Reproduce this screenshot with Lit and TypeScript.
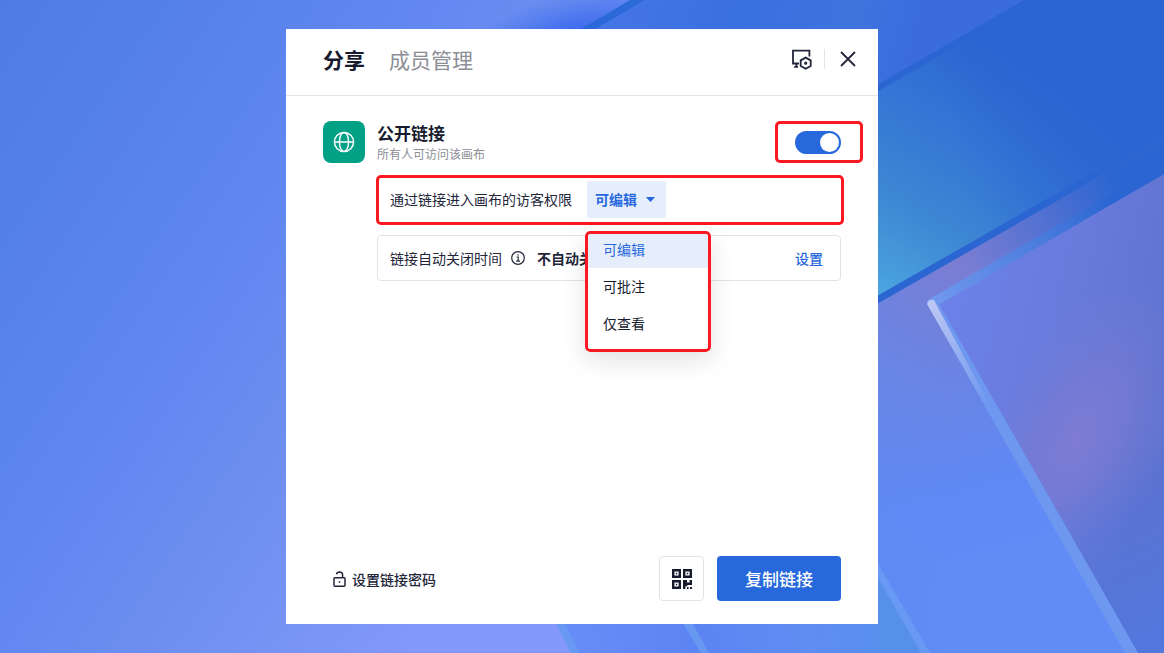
import { LitElement, html, css, svg } from "lit";
import { customElement, state } from "lit/decorators.js";

@customElement("app-backdrop")
class AppBackdrop extends LitElement {
  static styles = css`
    :host { display: block; overflow: hidden; }
    .art { display: block; width: 100%; height: 100%; }
  `;

  render() {
    return html`
      <svg class="art" viewBox="0 0 1164 653" preserveAspectRatio="xMidYMid slice" aria-hidden="true">
        <defs>
          <linearGradient id="base" gradientUnits="userSpaceOnUse" x1="0" y1="0" x2="581" y2="392">
            <stop offset="0" stop-color="#4d7de4" />
            <stop offset="0.25" stop-color="#5681eb" />
            <stop offset="0.5" stop-color="#6287f2" />
            <stop offset="0.65" stop-color="#6a8def" />
            <stop offset="1" stop-color="#8299f9" />
          </linearGradient>
          <radialGradient id="topGlow" gradientUnits="userSpaceOnUse" cx="0" cy="0" r="1" gradientTransform="translate(575 38) rotate(-14) scale(120 46)">
            <stop offset="0" stop-color="#3063ee" />
            <stop offset="1" stop-color="#3b69ee" stop-opacity="0" />
          </radialGradient>
          <linearGradient id="upper" gradientUnits="userSpaceOnUse" x1="620" y1="0" x2="900" y2="80">
            <stop offset="0" stop-color="#4475e4" />
            <stop offset="0.4" stop-color="#3a6fe0" />
            <stop offset="0.8" stop-color="#3f73dd" />
            <stop offset="1" stop-color="#3a6cde" />
          </linearGradient>
          <linearGradient id="teal" gradientUnits="userSpaceOnUse" x1="870" y1="290" x2="1010" y2="60">
            <stop offset="0" stop-color="#4ba5df" />
            <stop offset="0.35" stop-color="#3d86d3" />
            <stop offset="0.7" stop-color="#3374d5" />
            <stop offset="1" stop-color="#2a65d1" />
          </linearGradient>
          <linearGradient id="tealFade" gradientUnits="userSpaceOnUse" x1="960" y1="160" x2="1135" y2="110">
            <stop offset="0" stop-color="#2a65d1" stop-opacity="0" />
            <stop offset="1" stop-color="#2a65d1" />
          </linearGradient>
          <linearGradient id="violet" gradientUnits="userSpaceOnUse" x1="920" y1="270" x2="1000" y2="560">
            <stop offset="0" stop-color="#7a7dd2" />
            <stop offset="0.3" stop-color="#6d83e0" />
            <stop offset="0.75" stop-color="#5f89f5" />
            <stop offset="1" stop-color="#618bf5" />
          </linearGradient>
          <linearGradient id="violetLeft" gradientUnits="userSpaceOnUse" x1="870" y1="0" x2="950" y2="0">
            <stop offset="0" stop-color="#5f8af0" stop-opacity="0.4" />
            <stop offset="1" stop-color="#5f8af0" stop-opacity="0" />
          </linearGradient>
          <linearGradient id="stripFade" gradientUnits="userSpaceOnUse" x1="970" y1="270" x2="1125" y2="190">
            <stop offset="0" stop-color="#2a65d1" stop-opacity="0" />
            <stop offset="1" stop-color="#2a65d1" />
          </linearGradient>
          <linearGradient id="pane" gradientUnits="userSpaceOnUse" x1="940" y1="310" x2="1164" y2="360">
            <stop offset="0" stop-color="#6c82ea" />
            <stop offset="0.6" stop-color="#687ad9" />
            <stop offset="1" stop-color="#5d72cf" />
          </linearGradient>
          <radialGradient id="paneGlow" gradientUnits="userSpaceOnUse" cx="0" cy="0" r="1" gradientTransform="translate(1078 440) rotate(-62) scale(180 90)">
            <stop offset="0" stop-color="#7f7bd2" />
            <stop offset="0.4" stop-color="#797bd4" stop-opacity="0.7" />
            <stop offset="1" stop-color="#727bd8" stop-opacity="0" />
          </radialGradient>
          <linearGradient id="paneLow" gradientUnits="userSpaceOnUse" x1="1090" y1="480" x2="1160" y2="640">
            <stop offset="0" stop-color="#5277dd" stop-opacity="0" />
            <stop offset="1" stop-color="#5277dd" />
          </linearGradient>
          <linearGradient id="edgeTop" gradientUnits="userSpaceOnUse" x1="930" y1="300" x2="1110" y2="195">
            <stop offset="0" stop-color="#7199ee" />
            <stop offset="0.6" stop-color="#4b7cdd" />
            <stop offset="1" stop-color="#2a65d1" />
          </linearGradient>
          <linearGradient id="edgeShine" gradientUnits="userSpaceOnUse" x1="928" y1="308" x2="990" y2="402">
            <stop offset="0" stop-color="#bcc6f3" />
            <stop offset="1" stop-color="#bcc6f3" stop-opacity="0" />
          </linearGradient>
          <linearGradient id="lower" gradientUnits="userSpaceOnUse" x1="560" y1="653" x2="900" y2="590">
            <stop offset="0" stop-color="#688ef8" />
            <stop offset="0.4" stop-color="#5c84f2" />
            <stop offset="0.7" stop-color="#608df2" />
            <stop offset="1" stop-color="#5590ec" />
          </linearGradient>
        </defs>
        <rect width="1164" height="653" fill="url(#base)" />
        <rect x="350" width="350" height="120" fill="url(#topGlow)" />
        <path d="M645 0H1030L877 92L595 60V29Z" fill="url(#upper)" />
        <path d="M630 0H645L580 38H566Z" fill="#2c69d8" />
        <path d="M877 85L1024 0H1164V180L877 310Z" fill="#2a65d1" />
        <path d="M877 92L1050 -8H1164V132L877 296Z" fill="url(#teal)" />
        <path d="M877 92L1050 -8H1164V132L877 296Z" fill="url(#tealFade)" />
        <path d="M877 304L1164 140V653H877Z" fill="url(#violet)" />
        <path d="M877 304L970 251V653H877Z" fill="url(#violetLeft)" />
        <path d="M927 275L1164 140V174L939 304Z" fill="url(#stripFade)" />
        <path d="M939 304L1164 174V653H1138Z" fill="url(#pane)" />
        <path d="M939 304L1164 174V653H1138Z" fill="url(#paneGlow)" />
        <path d="M939 304L1164 174V653H1138Z" fill="url(#paneLow)" />
        <path d="M927 303Q927 300 931 298L1164 164V174L938 305Z" fill="url(#edgeTop)" />
        <path d="M927 304Q929 299 935 300L939 304L1138 653H1125Z" fill="#6e98f0" />
        <path d="M927 304Q928 299 934 300L990 406V414Z" fill="url(#edgeShine)" />
        <path d="M560 615L877 562L930 653H575Z" fill="url(#lower)" />
        <path d="M877 570L925 653H877Z" fill="#5790ea" />
        <path d="M552 615H560L580 653H571Z" fill="#6799f3" />
        <path d="M678 615H688L709 653H701Z" fill="#6799f3" />
        <path d="M870 550L930 653H921L870 564Z" fill="#6799f5" />
      </svg>
    `;
  }
}

const icons = {
  device: svg`<path d="M8 15.5H2V2.6H18.4V8.4M5.4 15.5V19.2M3.2 18.8H7" /><path d="M14.7 9.6L19.7 12.4V18L14.7 20.8L9.7 18V12.4Z" /><circle cx="14.7" cy="15.2" r="0.7" />`,
  close: svg`<path d="M1 1L15 15M15 1L1 15" />`,
  globe: svg`<circle cx="11" cy="11" r="9.6" /><ellipse cx="11" cy="11" rx="4.6" ry="9.6" /><path d="M1.4 11H20.6" />`,
  info: svg`<circle cx="7" cy="7" r="6.3" /><path d="M5.6 6H7.2V10.2M5.2 10.2H9" /><path d="M7 3.2V4.6" />`,
  lock: svg`<path d="M1 7.6Q1 6.8 1.8 6.8H11.2Q12 6.8 12 7.6V14.2Q12 15.2 11 15.2H2Q1 15.2 1 14.2Z" /><path d="M9.6 6.8V4Q9.6 1 6.5 1Q4 1 3.4 3.2" /><path d="M6.5 10.2V11.8" />`,
};

@customElement("app-root")
class AppRoot extends LitElement {
  static styles = css`
    :host {
      display: block;
      position: relative;
      font-family: "Noto Sans CJK SC", "Noto Sans", sans-serif;
      font-size: 14px;
      line-height: 20px;
      color: #23263a;
    }
    * { box-sizing: border-box; }
    button, select { font: inherit; color: inherit; border: 0; background: none; padding: 0; margin: 0; cursor: pointer; }
    h2, p, ul { margin: 0; padding: 0; }
    .backdrop { position: absolute; inset: 0; }
    .stage {
      position: relative;
      display: flex;
      justify-content: center;
      min-height: 100vh;
      padding: 29px 16px;
    }
    .dialog { display: flex; flex-direction: column; width: 100%; max-width: 592px; background: #fff; }
    .icon { display: block; flex: none; fill: none; stroke: currentColor; stroke-width: 1.5; }
    .icon.bold { stroke-width: 1.8; }

    .header {
      display: flex;
      align-items: center;
      justify-content: space-between;
      padding: 15px 22px 21px 37px;
      border-bottom: 1px solid #e4e5e7;
      color: #23263a;
    }
    .tabs { display: flex; gap: 24px; }
    .tab { font-size: 21px; line-height: 30px; color: #8c8e96; }
    .tab.active { font-weight: 700; color: #181b2e; }
    .tools { display: flex; align-items: center; gap: 11px; }
    .divider { width: 1px; height: 20px; background: #e4e5e7; }
    .close { padding-left: 4px; }

    .content { flex: 1; padding: 25px 37px 24px; }
    .summary { display: flex; align-items: center; gap: 12px; margin-bottom: 12px; }
    .tile {
      display: grid;
      place-items: center;
      width: 42px;
      height: 42px;
      border-radius: 8px;
      background: #02a085;
      color: #fff;
    }
    .caption { flex: 1; }
    .title { font-size: 17px; line-height: 24px; font-weight: 700; color: #181b2e; }
    .hint { font-size: 12px; line-height: 18px; color: #8c8e96; }
    .marked { border: 3px solid #fd1821; border-radius: 5px; }
    .toggle { display: block; margin-right: -22px; padding: 7px 19px 6px 17px; }
    .switch {
      appearance: none;
      display: block;
      width: 46px;
      height: 23px;
      margin: 0;
      padding: 2px;
      border-radius: 12px;
      background: #b9bdc6;
      cursor: pointer;
    }
    .switch::before {
      content: "";
      display: block;
      width: 19px;
      height: 19px;
      border-radius: 50%;
      background: #fff;
    }
    .switch:checked { background: #2769dc; }
    .switch:checked::before { margin-left: auto; }

    .rows { display: grid; gap: 10px; margin-left: 54px; }
    .row { display: flex; align-items: center; }
    .access { height: 50px; margin: 0 -3px 0 -1px; padding: 0 0 2px 11px; gap: 15px; }
    .expiry { height: 46px; padding: 0 17px 0 12px; border: 1px solid #e1e3e6; border-radius: 4px; }
    .info { margin: 0 12px 0 9px; stroke-width: 1.2; }
    .value { flex: 1; font-weight: 700; }
    .link { color: #2769dc; text-decoration: none; font-weight: 500; }

    .picker { position: relative; display: flex; align-items: center; }
    .select {
      appearance: none;
      width: 79px;
      height: 37px;
      padding: 0 8px;
      border-radius: 2px;
      background: #e6edfb;
      color: #2769dc;
      font-weight: 700;
    }
    .caret { position: absolute; right: 11px; fill: #2769dc; pointer-events: none; }
    .menu {
      position: absolute;
      top: 50px;
      left: -2px;
      z-index: 1;
      width: 126px;
      padding-bottom: 10px;
      border-radius: 5px;
      background: #fff;
      box-shadow: 0 8px 24px rgba(20, 24, 40, 0.13);
      list-style: none;
      overflow: hidden;
    }
    .menu::after {
      content: "";
      position: absolute;
      inset: 0;
      border: 3px solid #fd1821;
      border-radius: 5px;
      pointer-events: none;
    }
    .option { display: block; width: 100%; height: 37px; padding-left: 18px; text-align: left; color: #181b2e; }
    .option.chosen { background: #e6edfb; color: #2769dc; }

    .footer { display: flex; align-items: center; gap: 13px; padding: 0 37px 23px 47px; }
    .password { display: flex; align-items: center; gap: 6px; margin-right: auto; font-weight: 500; }
    .qr {
      display: grid;
      place-items: center;
      width: 45px;
      height: 45px;
      border: 1px solid #e1e3e6;
      border-radius: 4px;
      color: #181b2e;
    }
    .copy {
      width: 124px;
      height: 45px;
      border-radius: 4px;
      background: #2769dc;
      color: #fff;
      font-size: 17px;
      font-weight: 500;
    }
  `;

  private readonly options = ["可编辑", "可批注", "仅查看"];

  @state() private access = "可编辑";
  @state() private open = true;
  @state() private shared = true;

  private choose(option: string) {
    this.access = option;
    this.open = false;
  }

  private toggleMenu(event: Event) {
    event.preventDefault();
    this.open = !this.open;
  }

  private renderMenu() {
    return html`
      <ul class="menu">
        ${this.options.map(
          (option) => html`<li>
            <button class="option ${option === this.access ? "chosen" : ""}" @click=${() => this.choose(option)}>${option}</button>
          </li>`
        )}
      </ul>
    `;
  }

  render() {
    return html`
      <app-backdrop class="backdrop"></app-backdrop>
      <main class="stage">
        <section class="dialog">
          <header class="header">
            <nav class="tabs">
              <button class="tab active">分享</button>
              <button class="tab">成员管理</button>
            </nav>
            <div class="tools">
              <button><svg class="icon bold" width="22" height="22" viewBox="0 0 22 22">${icons.device}</svg></button>
              <span class="divider"></span>
              <button class="close"><svg class="icon bold" width="16" height="16" viewBox="0 0 16 16">${icons.close}</svg></button>
            </div>
          </header>

          <div class="content">
            <div class="summary">
              <span class="tile"><svg class="icon" width="22" height="22" viewBox="0 0 22 22">${icons.globe}</svg></span>
              <div class="caption">
                <h2 class="title" id="share-title">公开链接</h2>
                <p class="hint">所有人可访问该画布</p>
              </div>
              <label class="toggle marked">
                <input
                  class="switch"
                  type="checkbox"
                  aria-labelledby="share-title"
                  .checked=${this.shared}
                  @change=${(e: Event) => (this.shared = (e.target as HTMLInputElement).checked)}
                />
              </label>
            </div>

            <div class="rows">
              <div class="row access marked">
                <label for="access">通过链接进入画布的访客权限</label>
                <div class="picker">
                  <select class="select" id="access" .value=${this.access} @mousedown=${this.toggleMenu}
                    @change=${(e: Event) => this.choose((e.target as HTMLSelectElement).value)}>
                    ${this.options.map((option) => html`<option ?selected=${option === this.access}>${option}</option>`)}
                  </select>
                  <svg class="caret" width="9" height="5" viewBox="0 0 9 5"><path d="M0.8 0H8.2Q9.2 0 8.5 0.8L5 4.6Q4.5 5 4 4.6L0.5 0.8Q-0.2 0 0.8 0Z" /></svg>
                  ${this.open ? this.renderMenu() : null}
                </div>
              </div>
              <div class="row expiry">
                <span>链接自动关闭时间</span>
                <svg class="icon info" width="14" height="14" viewBox="0 0 14 14">${icons.info}</svg>
                <span class="value">不自动关闭</span>
                <a class="link" href="#">设置</a>
              </div>
            </div>
          </div>

          <footer class="footer">
            <button class="password">
              <svg class="icon" width="13" height="16" viewBox="0 0 13 16">${icons.lock}</svg>
              设置链接密码
            </button>
            <button class="qr">
              <svg width="20" height="20" viewBox="0 0 20 20" fill="currentColor" fill-rule="evenodd">
                <path d="M0 0H9V9H0ZM2.4 2.4V6.6H6.6V2.4ZM3.8 3.8H5.2V5.2H3.8Z" />
                <path d="M11 0H20V9H11ZM13.4 2.4V6.6H17.6V2.4ZM14.8 3.8H16.2V5.2H14.8Z" />
                <path d="M0 11H9V20H0ZM2.4 13.4V17.6H6.6V13.4ZM3.8 14.8H5.2V16.2H3.8Z" />
                <path d="M11 11H15V13.4H17.6V11H20V16H15.4V17.2H13.4V20H11ZM15 18H16.6V20H15ZM18 18H20V20H18Z" />
              </svg>
            </button>
            <button class="copy">复制链接</button>
          </footer>
        </section>
      </main>
    `;
  }
}
